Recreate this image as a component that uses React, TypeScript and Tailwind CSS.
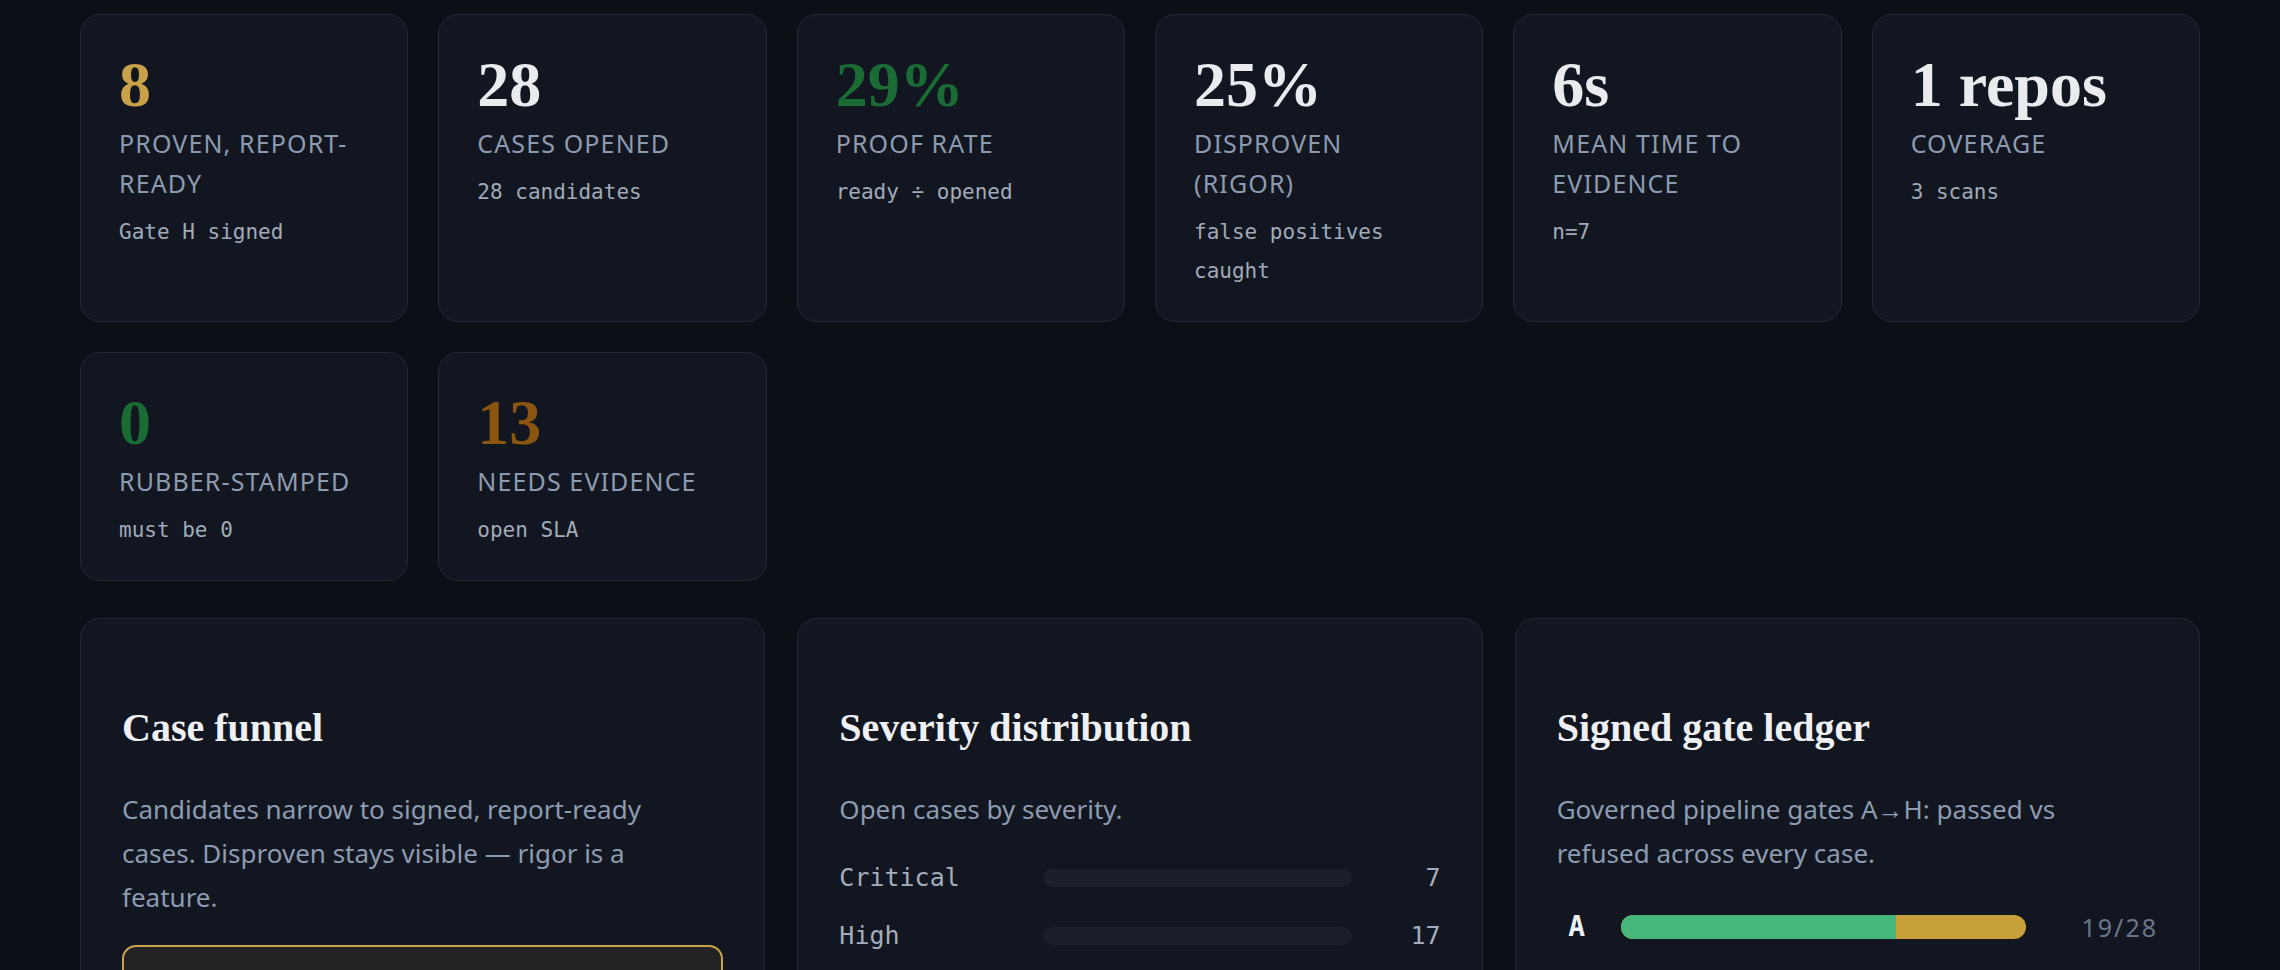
import React from "react";

const SANS = "font-['Noto_Sans','Open_Sans',sans-serif]";
const SERIF = "font-['Liberation_Serif','Times_New_Roman',serif]";
const MONO = "font-['DejaVu_Sans_Mono','Liberation_Mono',monospace]";

type Kpi = { value: string; label: string; sub: string; color: string };

const row1: Kpi[] = [
  { value: "8", label: "PROVEN, REPORT-READY", sub: "Gate H signed", color: "text-[#c9a14a]" },
  { value: "28", label: "CASES OPENED", sub: "28 candidates", color: "text-[#e9ebef]" },
  { value: "29%", label: "PROOF RATE", sub: "ready ÷ opened", color: "text-[#1b6b34]" },
  { value: "25%", label: "DISPROVEN (RIGOR)", sub: "false positives caught", color: "text-[#e9ebef]" },
  { value: "6s", label: "MEAN TIME TO EVIDENCE", sub: "n=7", color: "text-[#e9ebef]" },
  { value: "1 repos", label: "COVERAGE", sub: "3 scans", color: "text-[#e9ebef]" },
];

const row2: Kpi[] = [
  { value: "0", label: "RUBBER-STAMPED", sub: "must be 0", color: "text-[#1b6b34]" },
  { value: "13", label: "NEEDS EVIDENCE", sub: "open SLA", color: "text-[#8a5510]" },
];

function KpiCard({ k }: { k: Kpi }) {
  return (
    <div className="flex flex-col rounded-[20px] border border-[#232936] bg-[#121620] pl-[38px] pr-[42px] pt-[38px] pb-[30px]">
      <div className={`${SERIF} ${k.color} text-[64px] font-bold leading-[64px] whitespace-nowrap`}>{k.value}</div>
      <div className={`${SANS} mt-[6px] text-[25px] leading-[40px] tracking-[0.045em] text-[#8d9bb0]`}>{k.label}</div>
      <div className={`${MONO} mt-[10px] text-[21px] leading-[39px] text-[#a0aab8]`}>{k.sub}</div>
    </div>
  );
}

function PanelHead({ title, desc }: { title: string; desc: string }) {
  return (
    <>
      <h2 className={`${SERIF} text-[40px] font-bold leading-[48px] text-[#eef0f3]`}>{title}</h2>
      <p className={`${SANS} mt-[35px] max-w-[570px] text-[26px] leading-[44px] text-[#8d9bb0]`}>{desc}</p>
    </>
  );
}

const severities = [
  { name: "Critical", n: 7 },
  { name: "High", n: 17 },
];

const gates = [{ g: "A", pass: 19, total: 28 }];

export default function App() {
  return (
    <div className="h-[970px] w-[2280px] overflow-hidden bg-[#0c0f16] px-20 pt-[14px]">
      <div className="grid grid-cols-6 gap-[30px]">
        {row1.map((k) => (
          <KpiCard key={k.label} k={k} />
        ))}
        {row2.map((k) => (
          <KpiCard key={k.label} k={k} />
        ))}
      </div>

      <div className="mt-[37px] grid grid-cols-3 gap-8">
        {/* Case funnel */}
        <div className="rounded-[20px] border border-[#232936] bg-[#121620] px-[41px] pt-[85px] pb-10">
          <PanelHead
            title="Case funnel"
            desc="Candidates narrow to signed, report-ready cases. Disproven stays visible — rigor is a feature."
          />
          <div className="mt-[26px] h-[160px] rounded-[14px] border-2 border-[#c9a24a] bg-[#232323]" />
        </div>

        {/* Severity distribution */}
        <div className="rounded-[20px] border border-[#232936] bg-[#121620] px-[41px] pt-[85px] pb-10">
          <PanelHead title="Severity distribution" desc="Open cases by severity." />
          <div className="mt-[30px] flex flex-col gap-6">
            {severities.map((s) => (
              <div key={s.name} className="grid h-[34px] grid-cols-[180px_1fr_65px] items-center gap-6">
                <span className={`${MONO} text-[25px] leading-[34px] text-[#a3adbb]`}>{s.name}</span>
                <div className="h-[18px] rounded-full bg-[#1a1f2b]" />
                <span className={`${MONO} text-right text-[25px] leading-[34px] text-[#a3adbb]`}>{s.n}</span>
              </div>
            ))}
          </div>
        </div>

        {/* Signed gate ledger */}
        <div className="rounded-[20px] border border-[#232936] bg-[#121620] px-[41px] pt-[85px] pb-10">
          <PanelHead
            title="Signed gate ledger"
            desc="Governed pipeline gates A→H: passed vs refused across every case."
          />
          <div className="mt-[35px] flex flex-col gap-6">
            {gates.map((g) => (
              <div key={g.g} className="grid h-[34px] grid-cols-[40px_1fr_108px] items-center gap-6">
                <span className={`${MONO} text-center text-[28px] font-bold leading-[34px] text-[#eef0f3]`}>{g.g}</span>
                <div className="flex h-[24px] overflow-hidden rounded-full bg-[#c8a03a]">
                  <div className="h-full bg-[#46b679]" style={{ width: `${(g.pass / g.total) * 100}%` }} />
                </div>
                <span className={`${SANS} text-right text-[25px] leading-[34px] tracking-[0.08em] text-[#6b7689]`}>
                  {g.pass}/{g.total}
                </span>
              </div>
            ))}
          </div>
        </div>
      </div>
    </div>
  );
}
